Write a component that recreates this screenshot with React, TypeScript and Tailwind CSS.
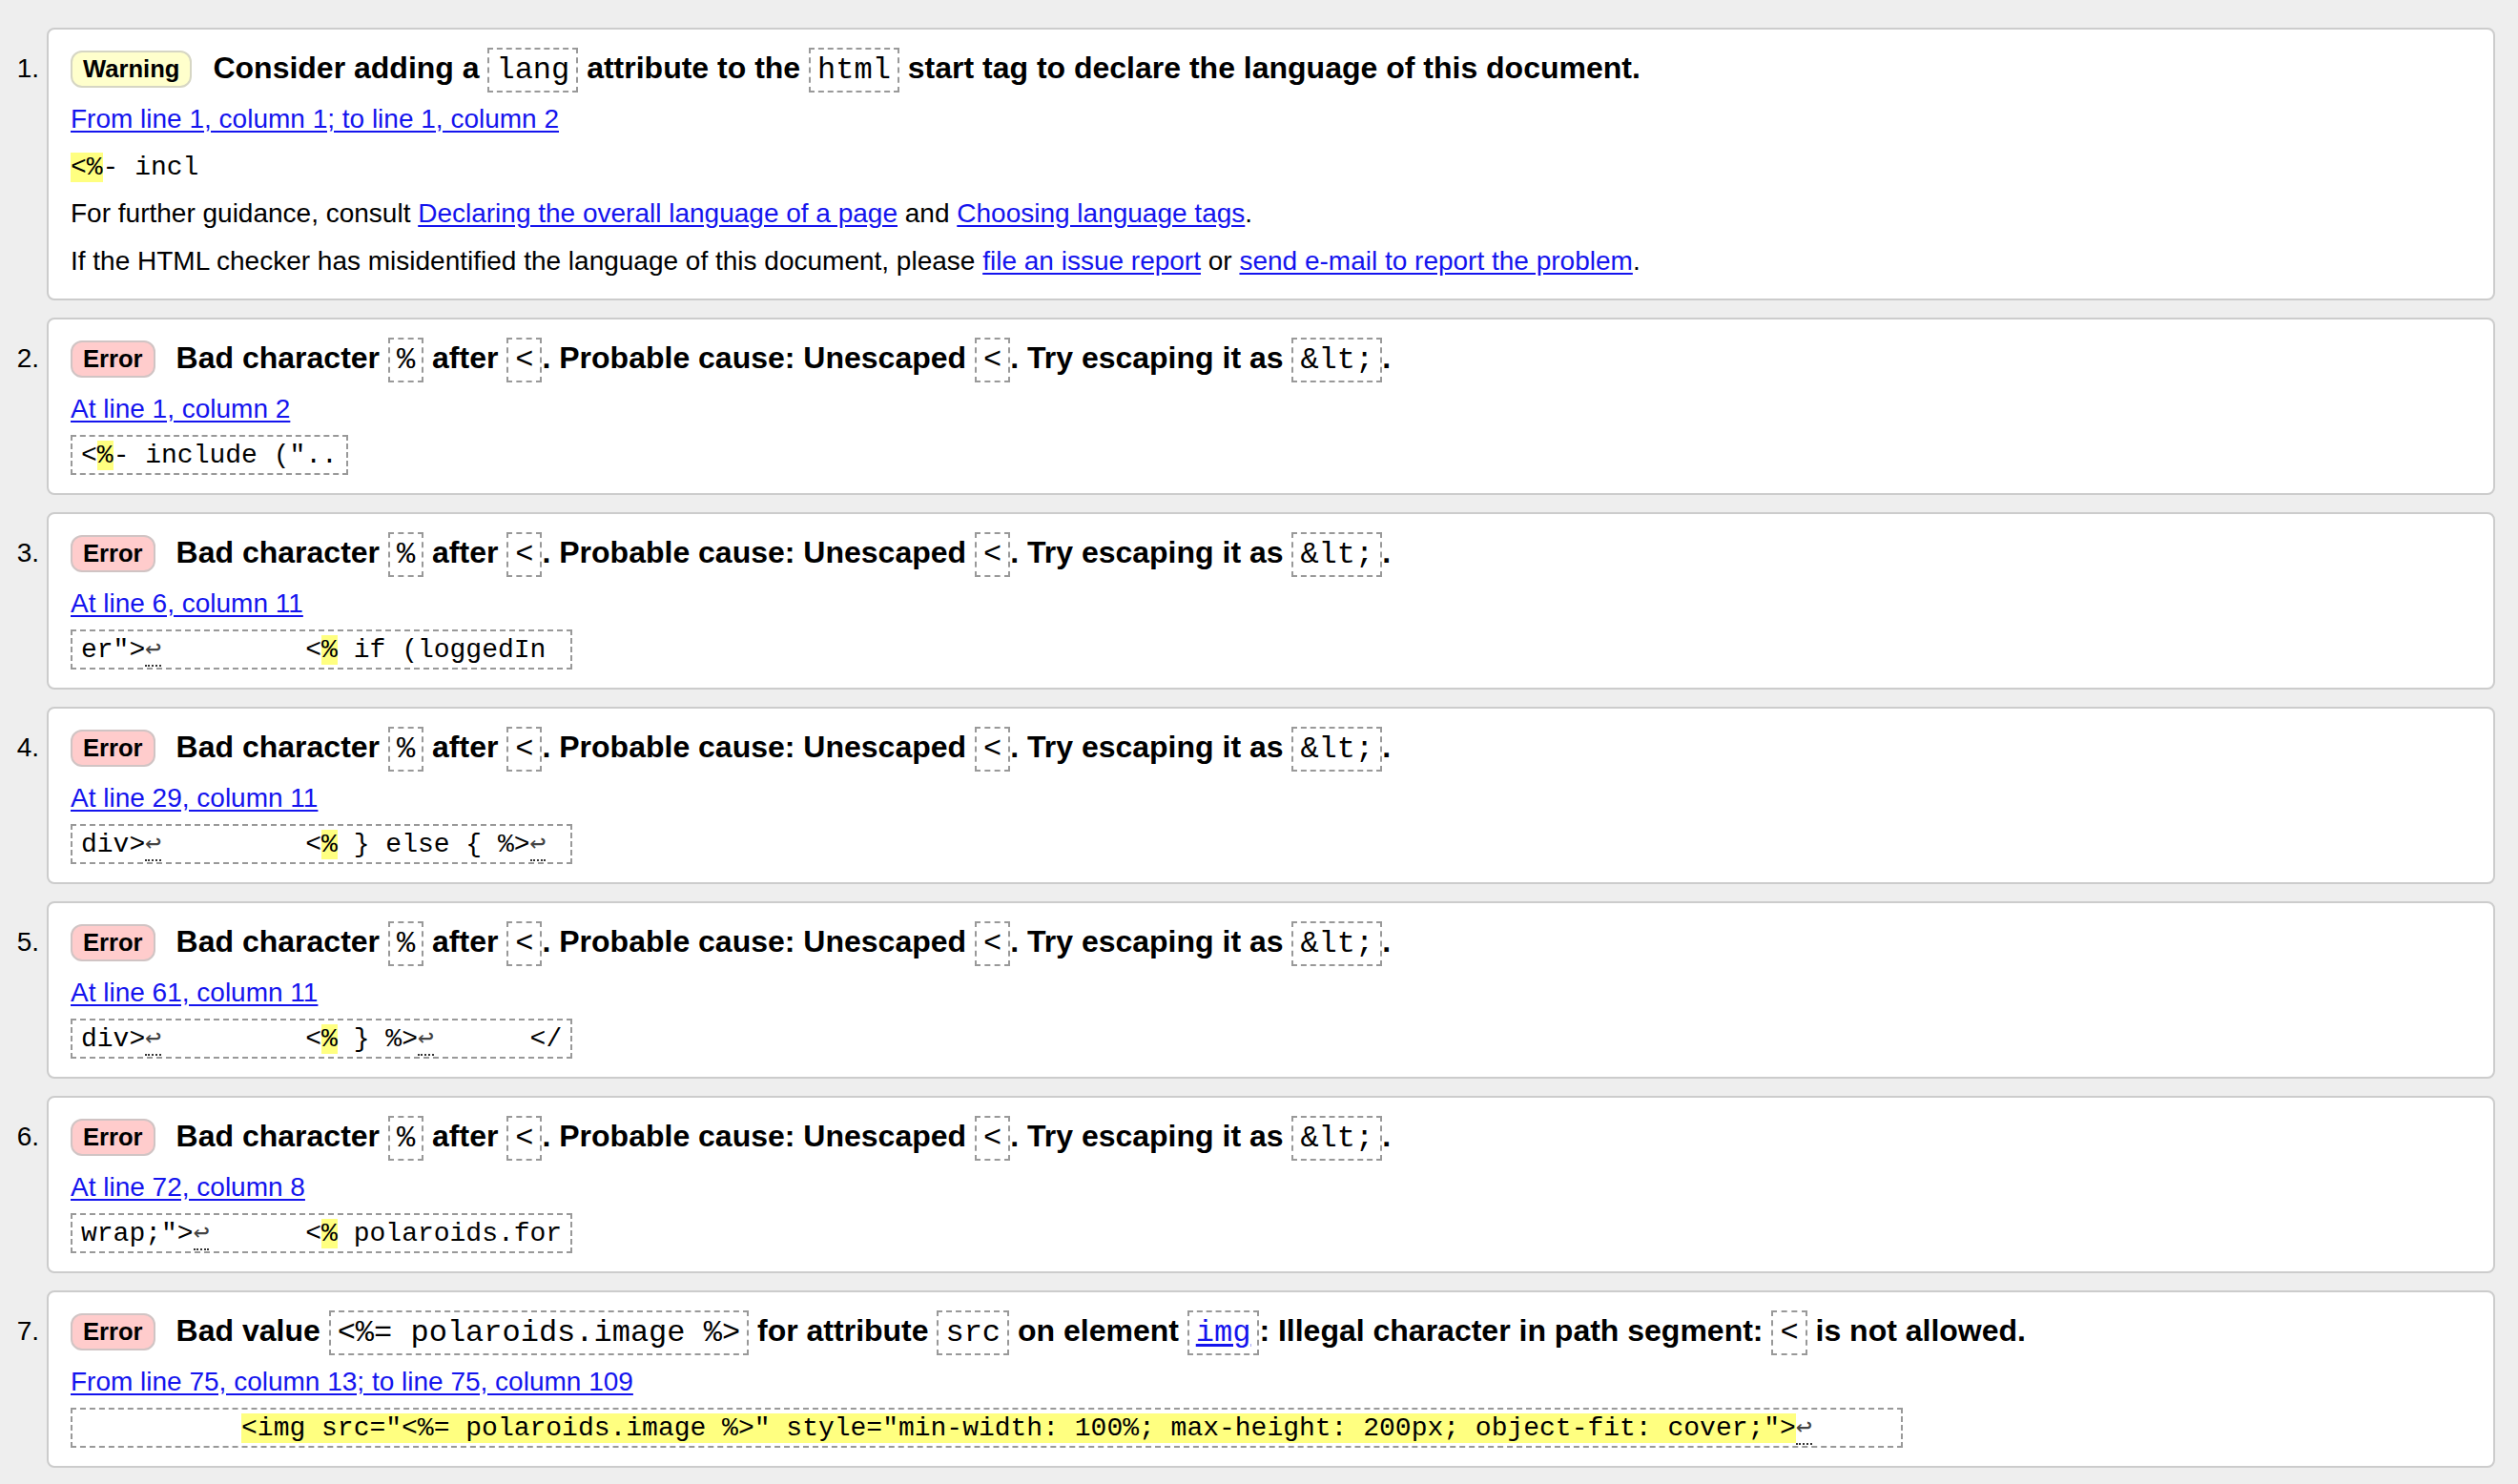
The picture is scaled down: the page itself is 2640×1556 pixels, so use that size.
import React from "react";

type Seg = string | { hl: string } | { lf: true };

interface Issue {
  kind: "Warning" | "Error";
  title: React.ReactNode;
  where: string;
  extract: Seg[];
  boxed: boolean;
  extra?: React.ReactNode;
}

const mono = "font-['Liberation_Mono','DejaVu_Sans_Mono',monospace]";

// inline code inside the bold message line
const Code = ({ children }: { children: React.ReactNode }) => (
  <code
    className={`${mono} inline-block align-middle border-2 border-dashed border-[#999] px-[7px] leading-[43px] text-[32px] font-normal`}
  >
    {children}
  </code>
);

const Link = ({ children }: { children: React.ReactNode }) => (
  <a href="#" className="text-[#1414ee] underline underline-offset-[3px]">
    {children}
  </a>
);

const badCharTitle = (
  <>
    Bad character <Code>%</Code> after <Code>&lt;</Code>. Probable cause: Unescaped{" "}
    <Code>&lt;</Code>. Try escaping it as <Code>&amp;lt;</Code>.
  </>
);

const issues: Issue[] = [
  {
    kind: "Warning",
    title: (
      <>
        Consider adding a <Code>lang</Code> attribute to the <Code>html</Code> start tag to
        declare the language of this document.
      </>
    ),
    where: "From line 1, column 1; to line 1, column 2",
    extract: [{ hl: "<%" }, "- incl"],
    boxed: false,
    extra: (
      <>
        <p className="mt-[16px] leading-8">
          For further guidance, consult <Link>Declaring the overall language of a page</Link> and{" "}
          <Link>Choosing language tags</Link>.
        </p>
        <p className="mt-[18px] mb-[4px] leading-8">
          If the HTML checker has misidentified the language of this document, please{" "}
          <Link>file an issue report</Link> or <Link>send e-mail to report the problem</Link>.
        </p>
      </>
    ),
  },
  {
    kind: "Error",
    title: badCharTitle,
    where: "At line 1, column 2",
    extract: ["<", { hl: "%" }, '- include ("..'],
    boxed: true,
  },
  {
    kind: "Error",
    title: badCharTitle,
    where: "At line 6, column 11",
    extract: ['er">', { lf: true }, "         <", { hl: "%" }, " if (loggedIn "],
    boxed: true,
  },
  {
    kind: "Error",
    title: badCharTitle,
    where: "At line 29, column 11",
    extract: ["div>", { lf: true }, "         <", { hl: "%" }, " } else { %>", { lf: true }, " "],
    boxed: true,
  },
  {
    kind: "Error",
    title: badCharTitle,
    where: "At line 61, column 11",
    extract: ["div>", { lf: true }, "         <", { hl: "%" }, " } %>", { lf: true }, "      </"],
    boxed: true,
  },
  {
    kind: "Error",
    title: badCharTitle,
    where: "At line 72, column 8",
    extract: ['wrap;">', { lf: true }, "      <", { hl: "%" }, " polaroids.for"],
    boxed: true,
  },
  {
    kind: "Error",
    title: (
      <>
        Bad value <Code>&lt;%= polaroids.image %&gt;</Code> for attribute <Code>src</Code> on
        element{" "}
        <Code>
          <a href="#" className="text-[#1414ee] underline underline-offset-[3px]">
            img
          </a>
        </Code>
        : Illegal character in path segment: <Code>&lt;</Code> is not allowed.
      </>
    ),
    where: "From line 75, column 13; to line 75, column 109",
    extract: [
      "          ",
      { hl: '<img src="<%= polaroids.image %>" style="min-width: 100%; max-height: 200px; object-fit: cover;">' },
      { lf: true },
      "     ",
    ],
    boxed: true,
  },
];

const Extract = ({ segs, boxed }: { segs: Seg[]; boxed: boolean }) => (
  <div
    className={`${mono} text-[28px] leading-8 whitespace-pre w-fit ${
      boxed ? "mt-[11px] border-2 border-dashed border-[#999] px-[9px] pt-[4px] pb-[2px]" : "mt-[19px]"
    }`}
  >
    {segs.map((s, i) => {
      if (typeof s === "string") return <span key={i}>{s}</span>;
      if ("hl" in s)
        return (
          <span key={i} className="bg-[#ffff80]">
            {s.hl}
          </span>
        );
      return (
        <b key={i} className="font-normal text-[#444] border-b-2 border-dotted border-[#333]">
          ↩
        </b>
      );
    })}
  </div>
);

export default function App() {
  return (
    <div className="min-h-screen bg-[#eeeeee] pt-[29px] pb-[17px] font-['Liberation_Sans',Arial,sans-serif] text-[28px] text-black">
      <ol className="flex flex-col gap-[18px]">
        {issues.map((it, i) => (
          <li key={i} className="flex">
            <div className="w-[49px] shrink-0 pr-[8px] pt-[27px] text-right leading-8">{i + 1}.</div>
            <div className="flex-1 mr-[24px] rounded-[8px] border-2 border-[#cccccc] bg-white pl-[23px] pr-[23px] pt-[17px] pb-[19px]">
              <div className="flex h-[48px] items-center">
                <span
                  className={`mr-[22px] shrink-0 rounded-[12px] border-2 px-[11px] text-[25.6px] font-bold leading-[35px] ${
                    it.kind === "Warning"
                      ? "bg-[#ffffcc] border-[#d6d6c4]"
                      : "bg-[#ffcccc] border-[#d0c4c4]"
                  }`}
                >
                  {it.kind}
                </span>
                <h2 className="whitespace-nowrap text-[32px] font-bold leading-[48px]">{it.title}</h2>
              </div>
              <p className="mt-[13px] leading-8">
                <Link>{it.where}</Link>
              </p>
              <Extract segs={it.extract} boxed={it.boxed} />
              {it.extra}
            </div>
          </li>
        ))}
      </ol>
    </div>
  );
}
